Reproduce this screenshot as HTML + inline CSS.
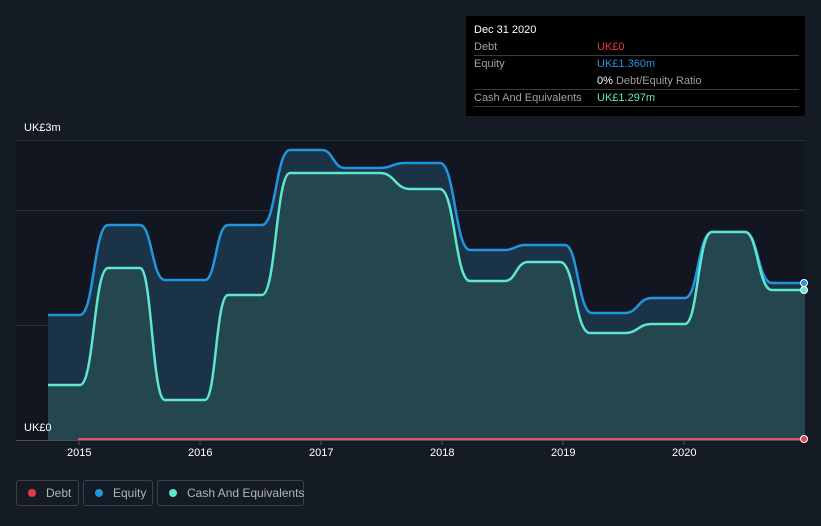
<!DOCTYPE html>
<html><head><style>
html,body{margin:0;width:821px;height:526px;overflow:hidden}
body{background:#151b25;font-family:"Liberation Sans",sans-serif;position:relative}
.tt{position:absolute;left:466px;top:16px;width:339px;height:100px;background:#000;font-size:11px}
.tt .r{position:absolute;left:8px;width:325px;border-bottom:1px solid #3a3a3a;height:16px;line-height:16px;color:#a0a0a0}
.tt .v{position:absolute;left:123px}
.lg{position:absolute;top:480px;height:26px;box-sizing:border-box;border:1px solid #3a404a;border-radius:3px;color:#b0b4ba;font-size:12px;line-height:24px;white-space:nowrap}
.dot{display:inline-block;width:8px;height:8px;border-radius:50%;margin:0 10px 0 11px;vertical-align:0px}
.ax{position:absolute;color:#fff;font-size:11px}
</style></head><body>
<svg width="821" height="526" style="position:absolute;left:0;top:0">
<rect x="16" y="140" width="789" height="300" fill="#111620"/>
<g stroke="#2a313b" stroke-width="1"><line x1="16" y1="140.5" x2="805" y2="140.5"/><line x1="16" y1="210.5" x2="805" y2="210.5"/><line x1="16" y1="325.5" x2="805" y2="325.5"/></g>
<path d="M48 315 L80 315 C94 315 94 225 108 225 L140 225 C152 225 152 280 165 280 L205 280 C216 280 216 225 228 225 L262 225 C276 225 276 150 290 150 L322 150 C333 150 333 168 345 168 L380 168 C392 168 392 163 405 163 L440 163 C455 163 455 250 470 250 L505 250 C515 250 515 245 525 245 L565 245 C578 245 578 313 592 313 L625 313 C638 313 638 298 652 298 L685 298 C698 298 698 232 712 232 L745 232 C758 232 758 283 772 283 L805 283 L805 440 L48 440Z" fill="#1a3347" stroke="none"/>
<path d="M48 315 L80 315 C94 315 94 225 108 225 L140 225 C152 225 152 280 165 280 L205 280 C216 280 216 225 228 225 L262 225 C276 225 276 150 290 150 L322 150 C333 150 333 168 345 168 L380 168 C392 168 392 163 405 163 L440 163 C455 163 455 250 470 250 L505 250 C515 250 515 245 525 245 L565 245 C578 245 578 313 592 313 L625 313 C638 313 638 298 652 298 L685 298 C698 298 698 232 712 232 L745 232 C758 232 758 283 772 283 L805 283" fill="none" stroke="#2394df" stroke-width="2.5"/>
<path d="M48 385 L80 385 C94 385 94 268 108 268 L140 268 C152 268 152 400 165 400 L205 400 C216 400 216 295 228 295 L262 295 C276 295 276 173 290 173 L380 173 C395 173 395 189 410 189 L440 189 C455 189 455 281 470 281 L505 281 C516 281 516 262 528 262 L560 262 C575 262 575 333 590 333 L625 333 C638 333 638 324 652 324 L685 324 C698 324 698 232 712 232 L745 232 C758 232 758 290 772 290 L805 290 L805 440 L48 440Z" fill="#24474f"/>
<path d="M48 385 L80 385 C94 385 94 268 108 268 L140 268 C152 268 152 400 165 400 L205 400 C216 400 216 295 228 295 L262 295 C276 295 276 173 290 173 L380 173 C395 173 395 189 410 189 L440 189 C455 189 455 281 470 281 L505 281 C516 281 516 262 528 262 L560 262 C575 262 575 333 590 333 L625 333 C638 333 638 324 652 324 L685 324 C698 324 698 232 712 232 L745 232 C758 232 758 290 772 290 L805 290" fill="none" stroke="#5ee6d0" stroke-width="2.5"/>
<line x1="78" y1="439" x2="805" y2="439" stroke="#e0545a" stroke-width="2"/>
<line x1="16" y1="440.5" x2="805" y2="440.5" stroke="#4a5058"/>
<g stroke="#4a5058"><line x1="79" y1="441" x2="79" y2="445"/><line x1="200" y1="441" x2="200" y2="445"/><line x1="321" y1="441" x2="321" y2="445"/><line x1="442" y1="441" x2="442" y2="445"/><line x1="563" y1="441" x2="563" y2="445"/><line x1="684" y1="441" x2="684" y2="445"/></g>
<circle cx="804" cy="283" r="3.5" fill="#2394df" stroke="#fff"/>
<circle cx="804" cy="290" r="3.5" fill="#5ee6d0" stroke="#fff"/>
<circle cx="804" cy="439" r="3.5" fill="#e0454c" stroke="#fff"/>
</svg>
<div class="ax" style="left:24px;top:122px">UK£3m</div>
<div class="ax" style="left:24px;top:422px">UK£0</div>
<div class="ax" style="left:67px;top:447px">2015</div>
<div class="ax" style="left:188px;top:447px">2016</div>
<div class="ax" style="left:309px;top:447px">2017</div>
<div class="ax" style="left:430px;top:447px">2018</div>
<div class="ax" style="left:551px;top:447px">2019</div>
<div class="ax" style="left:672px;top:447px">2020</div>
<div class="tt">
<div style="position:absolute;left:8px;top:8px;color:#fff">Dec 31 2020</div>
<div class="r" style="top:23px">Debt<span class="v" style="color:#e5393f">UK£0</span></div>
<div class="r" style="top:40px;border-bottom:none">Equity<span class="v" style="color:#2394df">UK£1.360m</span></div>
<div class="r" style="top:57px"><span class="v" style="color:#a0a0a0"><b style="color:#fff;font-weight:normal">0%</b> Debt/Equity Ratio</span></div>
<div class="r" style="top:74px">Cash And Equivalents<span class="v" style="color:#5ee6d0">UK£1.297m</span></div>
</div>
<div class="lg" style="left:16px;width:63px"><span class="dot" style="background:#e5393f"></span>Debt</div>
<div class="lg" style="left:83px;width:70px"><span class="dot" style="background:#2394df"></span>Equity</div>
<div class="lg" style="left:157px;width:147px"><span class="dot" style="background:#5ee6d0"></span>Cash And Equivalents</div>
</body></html>
